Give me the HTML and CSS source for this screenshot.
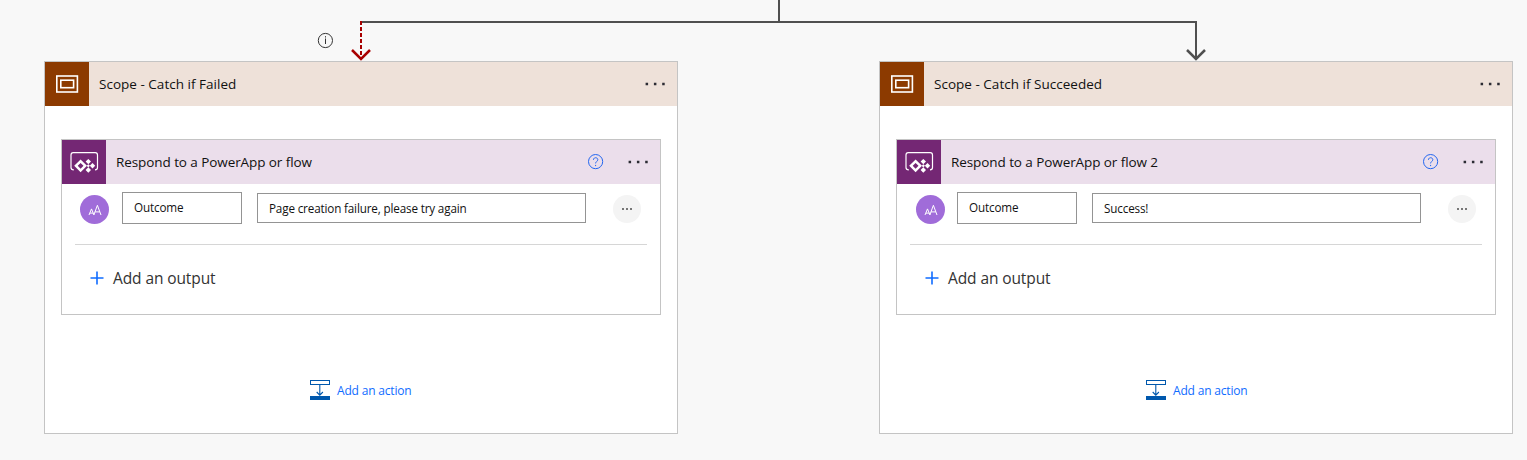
FILE: index.html
```
<!DOCTYPE html>
<html lang="en">
<head>
<meta charset="utf-8">
<title>Flow designer</title>
<link rel="stylesheet" href="styles.css">
</head>
<body>
<svg class="symbols" width="0" height="0" aria-hidden="true">
  <symbol id="scope" viewBox="0 0 44 44">
    <rect x="11.8" y="14" width="20.6" height="16" fill="none" stroke="#fff" stroke-width="1.6"/>
    <rect x="15.8" y="18.2" width="12.8" height="7.5" fill="none" stroke="#fff" stroke-width="1.6"/>
  </symbol>
  <symbol id="powerapp" viewBox="0 0 44 44">
    <path d="M11.8 29.8 Q9 29.8 9 27.5 V15 Q9 12.7 11.2 12.7 H33.3 Q35.5 12.7 35.5 15 V27.5 Q35.5 29.8 33 29.8" fill="none" stroke="#fff" stroke-width="1.2"/>
    <path fill-rule="evenodd" d="M18.6 19.4 L25 25.8 L18.6 32.2 L12.2 25.8 Z M18.6 22.9 L15.7 25.8 L18.6 28.7 L21.5 25.8 Z" fill="#fff"/>
    <path d="M26.3 18.9 L29 21.6 L26.3 24.3 L23.6 21.6 Z M30.5 23.1 L33.2 25.8 L30.5 28.5 L27.8 25.8 Z M26.3 27.3 L29 30 L26.3 32.7 L23.6 30 Z M26.3 24.2 L27.9 25.8 L26.3 27.4 L24.7 25.8 Z" fill="#fff"/>
  </symbol>
  <symbol id="dots" viewBox="0 0 20 4">
    <path d="M.6 .8h2.5v2.5H.6z M8.9 .8h2.5v2.5H8.9z M17.2 .8h2.5v2.5h-2.5z" fill="#2b2b33"/>
  </symbol>
  <symbol id="help" viewBox="0 0 16 16">
    <circle cx="7.6" cy="7.6" r="7.1" fill="none" stroke="#2266f0" stroke-width="1"/>
    <path d="M5.4 5.8 C5.5 3 9.8 3.1 9.8 5.7 C9.8 7.4 7.6 7.5 7.6 9.4 M7.6 10.9 V12.1" fill="none" stroke="#2266f0" stroke-width="1"/>
  </symbol>
  <symbol id="text-type" viewBox="0 0 29 29">
    <path d="M9 20 L11.5 13.9 L14 20 M9.9 18.1 H13.1 M13.8 20 L17.4 10.3 L21 20 M15 16.9 H19.8" fill="none" stroke="#fff" stroke-width="1"/>
  </symbol>
  <symbol id="insert" viewBox="0 0 20 20">
    <rect x=".5" y=".5" width="19" height="4" fill="#fff" stroke="#0058ad"/>
    <rect y="16" width="20" height="4" fill="#0058ad"/>
    <path d="M9.8 5 V15.4 M6.7 12 L9.8 15.2 L12.9 12" fill="none" stroke="#0058ad" stroke-width="1.1"/>
  </symbol>
</svg>

<svg class="connectors" viewBox="0 0 1527 61" width="1527" height="61">
  <path d="M779 0V22 M361 22H1196V59" fill="none" stroke="#505050" stroke-width="2"/>
  <path d="M1187 50L1196 59L1205 50" fill="none" stroke="#505050" stroke-width="2.5"/>
  <path d="M361 21V58" fill="none" stroke="#a80000" stroke-width="2" stroke-dasharray="4 2"/>
  <path d="M352 50L361 59L370 50" fill="none" stroke="#a80000" stroke-width="2.5"/>
  <circle cx="325.4" cy="40.5" r="7.1" fill="none" stroke="#333"/>
  <path d="M325.5 38.5V44 M325.5 36.2V37.5" stroke="#333" fill="none"/>
</svg>

<main class="branches">
  <section class="scope">
    <header class="bar scope-bar">
      <svg class="tile scope-tile"><use href="#scope"/></svg>
      <h2 class="title failed">Scope - Catch if Failed</h2>
      <svg class="dots"><use href="#dots"/></svg>
    </header>
    <article class="action">
      <header class="bar action-bar">
        <svg class="tile action-tile"><use href="#powerapp"/></svg>
        <h3 class="title respond">Respond to a PowerApp or flow</h3>
        <svg class="help"><use href="#help"/></svg>
        <svg class="dots"><use href="#dots"/></svg>
      </header>
      <div class="output">
        <svg class="type"><use href="#text-type"/></svg>
        <div class="field name">Outcome</div>
        <div class="field value">Page creation failure, please try again</div>
        <div class="more"><i></i><i></i><i></i></div>
      </div>
      <div class="add-output">
        <svg class="plus" viewBox="0 0 14 14"><path d="M7 .5V13.5M.5 7H13.5" stroke="#0f6cff" stroke-width="1.6"/></svg>
        <span>Add an output</span>
      </div>
    </article>
    <div class="add-action">
      <svg class="insert"><use href="#insert"/></svg>
      <span>Add an action</span>
    </div>
  </section>

  <section class="scope">
    <header class="bar scope-bar">
      <svg class="tile scope-tile"><use href="#scope"/></svg>
      <h2 class="title succeeded">Scope - Catch if Succeeded</h2>
      <svg class="dots"><use href="#dots"/></svg>
    </header>
    <article class="action">
      <header class="bar action-bar">
        <svg class="tile action-tile"><use href="#powerapp"/></svg>
        <h3 class="title respond">Respond to a PowerApp or flow 2</h3>
        <svg class="help"><use href="#help"/></svg>
        <svg class="dots"><use href="#dots"/></svg>
      </header>
      <div class="output shifted">
        <svg class="type"><use href="#text-type"/></svg>
        <div class="field name">Outcome</div>
        <div class="field value">Success!</div>
        <div class="more"><i></i><i></i><i></i></div>
      </div>
      <div class="add-output">
        <svg class="plus" viewBox="0 0 14 14"><path d="M7 .5V13.5M.5 7H13.5" stroke="#0f6cff" stroke-width="1.6"/></svg>
        <span>Add an output</span>
      </div>
    </article>
    <div class="add-action shifted">
      <svg class="insert"><use href="#insert"/></svg>
      <span>Add an action</span>
    </div>
  </section>
</main>
</body>
</html>
```
FILE: styles.css
```
* { box-sizing: border-box; }
body {
  margin: 0;
  height: 460px;
  overflow: hidden;
  background: #f8f8f8;
  font-family: "Open Sans", "Noto Sans", sans-serif;
  color: #111;
}
svg { display: block; flex: none; }
.symbols { position: absolute; }
.branches {
  display: flex;
  gap: 201px;
  padding-left: 44px;
}
.scope {
  flex: none;
  width: 634px;
  height: 373px;
  border: 1px solid #c4c4c4;
  background: #fff;
}
.bar {
  display: flex;
  align-items: center;
  height: 44px;
}
.scope-bar { background: #eee1d9; padding-right: 12px; }
.action-bar { background: #ebdeeb; padding-right: 12px; }
.tile { width: 44px; height: 44px; }
.scope-tile { background: #8c3a00; }
.action-tile { background: #742774; }
.title {
  flex: 1;
  margin: 0;
  padding-left: 10px;
  font-size: 13.5px;
  font-weight: 400;
  line-height: 20px;
  white-space: nowrap;
}
.failed, .succeeded { letter-spacing: 0.02px; }
.respond { letter-spacing: -0.08px; }
.dots { width: 20px; height: 4px; }
.help { width: 16px; height: 16px; margin-right: 24px; }
.action {
  width: 600px;
  height: 176px;
  margin: 33px 16px 0;
  border: 1px solid #c4c4c4;
}
.output {
  display: flex;
  height: 61px;
  margin: 0 13px;
  padding: 8px 0 0 5px;
  border-bottom: 1px solid #d6d6d6;
}
.type {
  width: 29px;
  height: 29px;
  margin: 3px 13px 0 0;
  border-radius: 50%;
  background: #a06cd9;
}
.output.shifted .type { margin-left: 1px; margin-right: 12px; }
.field {
  border: 1px solid #949494;
  padding-left: 11px;
  font-size: 11.7px;
  letter-spacing: -0.16px;
  line-height: 28px;
  white-space: nowrap;
}
.name { width: 120px; height: 32px; margin-right: 15px; }
.value { width: 329px; height: 30px; margin: 1px 27px 0 0; }
.more {
  display: flex;
  align-items: center;
  justify-content: center;
  gap: 2px;
  width: 28px;
  height: 28px;
  margin-top: 3px;
  border-radius: 50%;
  background: #f4f4f4;
}
.more i { width: 2px; height: 2px; background: #777; }
.add-output {
  display: flex;
  align-items: center;
  height: 66px;
  padding-left: 28px;
  gap: 9px;
  font-size: 15.5px;
  letter-spacing: -0.1px;
  color: #333;
}
.plus { width: 14px; height: 14px; }
.add-action {
  display: flex;
  align-items: center;
  height: 20px;
  margin: 65px 0 0 265px;
  gap: 7px;
  font-size: 12px;
  letter-spacing: -0.18px;
  color: #0f6cff;
}
.add-action.shifted { margin-left: 266px; }
.insert { width: 20px; height: 20px; }
```
